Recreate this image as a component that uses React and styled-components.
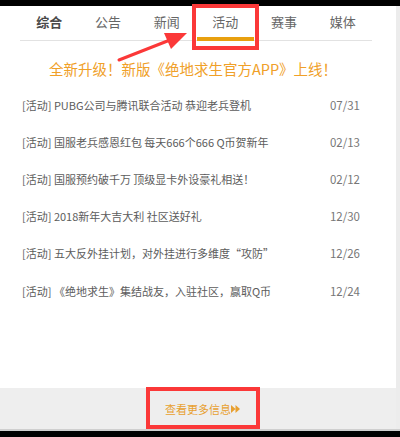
import React from "react";
import styled, { createGlobalStyle } from "styled-components";

const Global = createGlobalStyle`
  html, body { margin: 0; padding: 0; background: #000; }
  body { font-family: "Noto Sans CJK SC", "Noto Sans", sans-serif; }
  * { box-sizing: border-box; }
`;

const Screen = styled.div`
  position: relative;
  width: 400px;
  height: 437px;
  background: #000;
  padding: 6px 0 6px;
  display: flex;
  flex-direction: column;
  overflow: hidden;
`;

const Window = styled.div`
  flex: 1;
  display: flex;
  background: #fff;
  border-bottom: 2px solid #cfcfcf;
`;

const Content = styled.div`
  flex: 1;
  display: flex;
  flex-direction: column;
`;

const Scrollbar = styled.div`
  width: 4px;
  background: #ececec;
`;

const TabBar = styled.div`
  display: flex;
  margin: 0 24px 0 20px;
  height: 35px;
  border-bottom: 1px solid #e2e2e2;
`;

const Tab = styled.div`
  flex: 1;
  display: flex;
  align-items: center;
  justify-content: center;
  font-size: 13px;
  color: ${(p) => (p.$bold ? "#4a4a4a" : "#666")};
  font-weight: ${(p) => (p.$bold ? 700 : 400)};
  padding-bottom: 4px;
  position: relative;
  &::after {
    content: "";
    display: ${(p) => (p.$active ? "block" : "none")};
    position: absolute;
    left: 1px;
    right: 1px;
    bottom: -1px;
    height: 4px;
    background: #e8a00f;
  }
`;

const Headline = styled.div`
  text-align: center;
  color: #f0a028;
  font-size: 14.5px;
  line-height: 20px;
  margin: 18px 0 0 -10px;
`;

const List = styled.ul`
  list-style: none;
  margin: 7px 0 0;
  padding: 0 36px 0 22px;
`;

const Row = styled.li`
  display: flex;
  justify-content: space-between;
  align-items: center;
  height: 37.2px;
  font-size: 11px;
  color: #5c5c5c;
`;

const DateText = styled.span`
  color: #777;
  font-size: 11.5px;
`;

const Spacer = styled.div`
  flex: 1;
`;

const Footer = styled.div`
  height: 41px;
  background: #eeeeee;
  display: flex;
  align-items: center;
  justify-content: center;
  padding-left: 9px;
`;

const More = styled.span`
  display: inline-flex;
  align-items: center;
  font-size: 11px;
  color: #e8a030;
  padding-top: 1px;
`;

const Annot = styled.div`
  position: absolute;
  border: 4px solid #fb3838;
  left: ${(p) => p.$x}px;
  top: ${(p) => p.$y}px;
  width: ${(p) => p.$w}px;
  height: ${(p) => p.$h}px;
  pointer-events: none;
`;

const ArrowSvg = styled.svg`
  position: absolute;
  left: 0;
  top: 0;
  pointer-events: none;
`;

const tabs = ["综合", "公告", "新闻", "活动", "赛事", "媒体"];
const items = [
  ["[活动] PUBG公司与腾讯联合活动 恭迎老兵登机", "07/31"],
  ["[活动] 国服老兵感恩红包 每天666个666 Q币贺新年", "02/13"],
  ["[活动] 国服预约破千万 顶级显卡外设豪礼相送！", "02/12"],
  ["[活动] 2018新年大吉大利 社区送好礼", "12/30"],
  ["[活动] 五大反外挂计划，对外挂进行多维度“攻防”", "12/26"],
  ["[活动] 《绝地求生》集结战友，入驻社区，赢取Q币", "12/24"],
];

export default function App() {
  return (
    <>
      <Global />
      <Screen>
        <Window>
          <Content>
            <TabBar>
              {tabs.map((t, i) => (
                <Tab key={t} $bold={i === 0} $active={i === 3}>
                  {t}
                </Tab>
              ))}
            </TabBar>
            <Headline>全新升级！新版《绝地求生官方APP》上线！</Headline>
            <List>
              {items.map(([t, d]) => (
                <Row key={d}>
                  <span>{t}</span>
                  <DateText>{d}</DateText>
                </Row>
              ))}
            </List>
            <Spacer />
            <Footer>
              <More>
                查看更多信息
                <svg width="9" height="8" viewBox="0 0 9 8">
                  <path d="M0 0 L4.5 4 L0 8 Z M4.5 0 L9 4 L4.5 8 Z" fill="#e8a030" />
                </svg>
              </More>
            </Footer>
          </Content>
          <Scrollbar />
        </Window>
        <Annot $x={192} $y={4} $w={67} $h={46} />
        <Annot $x={146} $y={387} $w={114} $h={42} />
        <ArrowSvg width="400" height="437" viewBox="0 0 400 437">
          <line x1="119" y1="60" x2="170" y2="40" stroke="#fb3838" strokeWidth="3" strokeLinecap="round" />
          <path d="M187 33 L164 33 L171 49 Z" fill="#fb3838" />
        </ArrowSvg>
      </Screen>
    </>
  );
}
